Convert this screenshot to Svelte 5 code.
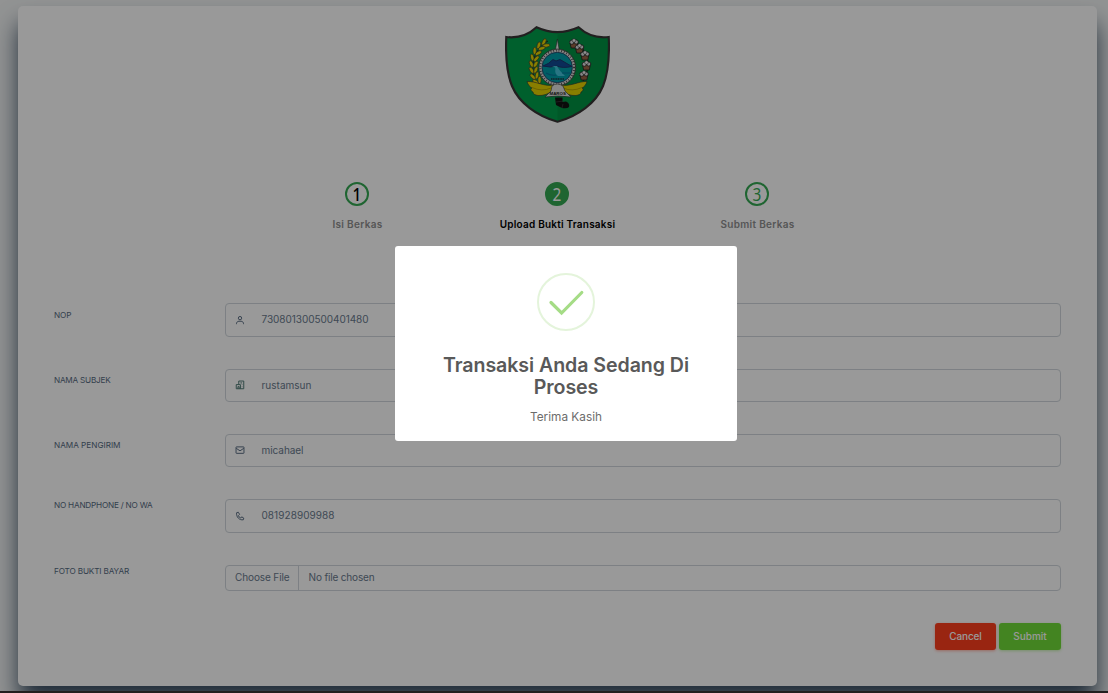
<script>
  const steps = [
    { n: 1, label: 'Isi Berkas', width: 50, state: 'done' },
    { n: 2, label: 'Upload Bukti Transaksi', width: 115.5, state: 'active' },
    { n: 3, label: 'Submit Berkas', width: 74, state: 'todo' }
  ];
  const fields = [
    { label: 'NOP', lw: 17.5, value: '730801300500401480', vw: 107, icon: 'user', drop: 5.4 },
    { label: 'NAMA SUBJEK', lw: 56.5, value: 'rustamsun', vw: 50, icon: 'building', drop: 5 },
    { label: 'NAMA PENGIRIM', lw: 66.5, value: 'micahael', vw: 42, icon: 'mail', drop: 4.8 },
    { label: 'NO HANDPHONE / NO WA', lw: 98.5, value: '081928909988', vw: 73, icon: 'phone', drop: 0 }
  ];

  const leaves = [[41, 17, 55], [36, 20, 45], [32, 25, 30], [29.5, 31, 15], [28.5, 37, 3], [28.5, 43, -6], [29.5, 49, -18], [32, 54, -28]];
  const cotton = [[69, 17], [74.5, 22], [80, 29], [81.5, 39], [79, 49]];

  // Spreads a line of text evenly over a fixed width.
  function fit(node, width) {
    const apply = () => {
      node.style.letterSpacing = '0px';
      const natural = node.getBoundingClientRect().width;
      const count = node.textContent.length;
      node.style.letterSpacing = (width - natural) / count + 'px';
    };
    apply();
    document.fonts?.ready.then(apply);
  }
</script>

<div class="page">
  <main class="card">
    <svg class="logo" viewBox="0 0 105 97">
      <path d="M1.3 11 Q19 13 31.5 1.3 Q52.5 11 73.5 1.3 Q86 13 103.7 11 C104.5 29 104 45 98 60 C91 77 73 90 52.5 95.7 C32 90 14 77 7 60 C1 45 .5 29 1.3 11Z" fill="#00a04c" stroke="#373435" stroke-width="2.2" />
      <path d="M73.5 2.6 Q86 13.5 102.6 12 C103.4 30 103 45 97 60 C90 76 73 89 52.5 94.5V8.4Q64 7 73.5 2.6Z" fill="#007a35" opacity=".35" />
      <path d="M43 15C29 23 24 40 31 57" fill="none" stroke="#222" stroke-width="1" />
      {#each leaves as g}
        <g transform="translate({g[0]} {g[1]}) rotate({g[2]})" fill="#e5d500" stroke="#333" stroke-width=".6">
          <ellipse cx="-2.3" cy="0" rx="1.7" ry="3.6" transform="rotate(-28)" />
          <ellipse cx="2.5" cy="0" rx="1.7" ry="3.6" transform="rotate(28)" />
        </g>
      {/each}
      <path d="M71 17Q82 25 83 36Q83 48 78 55" fill="none" stroke="#222" stroke-width="1.1" />
      {#each cotton as c}
        <g transform="translate({c[0]} {c[1]})">
          <path d="M-4 0L4-1L2.8 5L-2.8 5Z" fill="#9a6344" stroke="#222" stroke-width=".8" />
          <circle cx="-2.2" cy="-.8" r="2.1" fill="#dedede" stroke="#222" stroke-width=".8" />
          <circle cx="2.2" cy="-1" r="2.1" fill="#dedede" stroke="#222" stroke-width=".8" />
          <circle cx="0" cy="-2.5" r="1.8" fill="#eee" stroke="#333" stroke-width=".5" />
        </g>
      {/each}
      <path d="M50.2 25L52.4 13L54.4 25Z" fill="#eee" stroke="#333" stroke-width=".6" />
      <circle cx="52.2" cy="41.5" r="18.4" fill="#dcd9d9" stroke="#333" stroke-width=".8" />
      <circle cx="52.2" cy="41.5" r="17" fill="none" stroke="#444" stroke-width="2.2" stroke-dasharray=".8 1.9" />
      <circle cx="52.2" cy="41.5" r="15.2" fill="#009da8" stroke="#24345d" stroke-width=".8" />
      <path d="M38 40Q44 38 48 33.5L51 35L55 33.5L67 40.5Q57 42.5 52 40Q45 42 38 40Z" fill="#124a94" stroke="#1c356f" stroke-width="1" />
      <path d="M47 40C54 42 47 45 53 50L60 50C56 46 54 44 52 40Z" fill="#45c4dc" />
      <path d="M41 47Q46 50 51 49M57 47H65" stroke="#08759c" stroke-width="1.2" fill="none" />
      <path d="M46 53H59" stroke="#20333d" stroke-width="1.6" stroke-dasharray="1.2 .5" />
      <path d="M48 59C40 61 31 55 22 55.5C23 59 25 61 27 62C25 63 26 65 28 66C28 68 30 69 33 69.5Q41 70 49 64ZM56 59C65 61 74 55 82 55.5C81 59 79 61 77 62C79 63 78 65 76 66C76 68 74 69 71 69.5Q63 70 55 64Z" fill="#e5d300" stroke="#333" stroke-width=".6" />
      <path d="M27 61.5Q37 66 46 62M77 61.5Q67 66 58 62" fill="none" stroke="#8a7d00" stroke-width=".5" />
      <path d="M47 60Q52 56 58 60L60 65L66 71Q53 69 40 71L46 65Z" fill="#e2e2df" stroke="#333" stroke-width=".6" />
      <text x="52.7" y="69" text-anchor="middle">MAROS</text>
      <path d="M50 71.5H57.5V76L61 75.5Q65 77 64 81Q62 83 57 82L51 79Z" fill="#111" />
      <path d="M51 76L58 75M58 78L57 82" stroke="#666" stroke-width=".4" />
    </svg>

    <div class="steps">
      {#each steps as s}
        <div class="step {s.state}">
          <span class="num"><span class="digit">{s.n}</span></span>
          <div class="caption"><span use:fit={s.width}>{s.label}</span></div>
        </div>
      {/each}
    </div>

    <form class="form" onsubmit={(e) => e.preventDefault()}>
      {#each fields as f}
        <div class="row">
          <div class="label" style="padding-top:{f.drop}px"><span use:fit={f.lw}>{f.label}</span></div>
          <div class="input">
            <svg class="icon {f.icon}" viewBox="0 0 24 24">
              {#if f.icon === 'user'}
                <circle cx="12" cy="7.5" r="4" /><path d="M3.5 22v-1c0-4 3-6 6-6h5c3 0 6 2 6 6v1" />
              {:else if f.icon === 'building'}
                <path d="M9 10V2.5h12v18.5H3V11h10v10M7 21v-5h3v5M13 7h4M17 11v1M17 16v1" />
              {:else if f.icon === 'mail'}
                <rect x="2.5" y="4.5" width="19" height="15.5" rx="1" /><path d="m3 8 9 6 9-6" />
              {:else}
                <path d="M4 4l4-1 3 5-3 3c1 3 3 5 6 6l2-3 5 3-1 4c-9 2-18-7-16-17Z" />
              {/if}
            </svg>
            <span use:fit={f.vw}>{f.value}</span>
          </div>
        </div>
      {/each}
      <div class="row">
        <div class="label"><span use:fit={75}>FOTO BUKTI BAYAR</span></div>
        <div class="input file">
          <div class="choose"><span use:fit={54.5}>Choose File</span></div>
          <div class="none"><span use:fit={66}>No file chosen</span></div>
        </div>
      </div>
      <div class="actions">
        <button class="cancel"><span use:fit={32.5}>Cancel</span></button>
        <button class="submit"><span use:fit={33.5}>Submit</span></button>
      </div>
    </form>
  </main>
  <div class="strip"></div>
</div>

<div class="overlay">
  <div class="modal" role="dialog">
    <svg class="check" viewBox="0 0 58 58">
      <circle cx="29" cy="29" r="28" fill="none" stroke="#e4f4db" stroke-width="2" />
      <path d="M14 29.5L24.6 40L44.8 19.5" fill="none" stroke="#a5dc86" stroke-width="3.2" stroke-linecap="round" />
    </svg>
    <h2><span use:fit={246}>Transaksi Anda Sedang Di</span><br /><span use:fit={64.5}>Proses</span></h2>
    <p><span use:fit={72}>Terima Kasih</span></p>
  </div>
</div>

<style>
  :global(body) { margin: 0; overflow: hidden; background: #f5f5f9; }
  .page {
    width: 1108px;
    height: 693px;
    box-sizing: border-box;
    padding: 6px 11px 0 18px;
    overflow: hidden;
    background: #f3f5f5;
    font-family: Inter, sans-serif;
    display: flex;
    flex-direction: column;
  }
  span { display: inline-block; white-space: nowrap; }
  .card {
    flex: none;
    height: 680px;
    box-sizing: border-box;
    padding: 20px 36px 0;
    border-radius: 5px;
    background: #fff;
    box-shadow: 0 17px 23px -1px #34495e;
    display: flex;
    flex-direction: column;
    align-items: center;
  }
  .strip { flex: none; height: 2px; margin: 5px -11px 0 -18px; background: #3a3435; z-index: 1; }
  .logo { width: 105px; height: 97px; }
  .logo text { font: bold 4.4px "Liberation Sans", sans-serif; fill: #222; }
  .steps { display: flex; margin-top: 58.7px; margin-left: -1px; }
  .step { width: 200px; display: flex; flex-direction: column; align-items: center; color: #8f8f8f; }
  .num {
    width: 24.5px;
    height: 24.5px;
    box-sizing: border-box;
    border: 2px solid #34a853;
    border-radius: 50%;
    text-align: center;
    font: 17.5px/20.5px "Noto Sans", sans-serif;
    color: #34a853;
  }
  .digit { transform: scaleX(0.88); }
  .done .num { color: #000; font-weight: 500; }
  .active .num { background: #34a853; color: #fff; }
  .caption { margin-top: 10px; padding-left: 1px; font: 600 10px/16px Inter, sans-serif; }
  .active .caption { color: #000; }
  .form { align-self: stretch; margin-top: 71.2px; display: flex; flex-direction: column; gap: 32px; }
  .row { display: grid; grid-template-columns: 171px 1fr; }
  .label { font-size: 8.2px; line-height: 13px; color: #566a7f; }
  .input {
    height: 33.35px;
    box-sizing: border-box;
    border: 1px solid #d0d6dc;
    border-radius: 4px;
    display: flex;
    align-items: center;
    font-size: 10px;
    color: #697a8d;
  }
  .input > span { margin-top: -1.2px; }
  .icon { width: 10px; height: 10px; margin: -1px 17px 0 8.5px; fill: none; stroke: #566a7f; stroke-width: 2.3; }
  .building { stroke: #4b7772; }
  .file { height: 26px; }
  .choose { width: 73px; height: 24px; line-height: 23px; box-sizing: border-box; padding-left: 9px; border-right: 1px solid #d0d6dc; }
  .none { height: 24px; line-height: 23px; padding-left: 9.5px; }
  .actions { display: flex; justify-content: flex-end; gap: 3px; }
  button {
    width: 61px;
    height: 27px;
    padding: 0;
    border: 0;
    border-radius: 3px;
    font: 500 10px/27px Inter, sans-serif;
    color: #fff;
  }
  .submit { width: 62px; background: #71dd37; box-shadow: 0 1px 3px rgba(113, 221, 55, 0.4); }
  .cancel { background: #ff3e1d; box-shadow: 0 1px 3px rgba(255, 62, 29, 0.4); }
  .overlay { position: fixed; inset: 0; z-index: 5; background: rgba(0, 0, 0, 0.4); font-family: Inter, sans-serif; }
  .modal {
    position: absolute;
    left: 395px;
    top: 246px;
    width: 342px;
    height: 195px;
    box-sizing: border-box;
    padding-top: 27px;
    border-radius: 3px;
    background: #fff;
    display: flex;
    flex-direction: column;
    align-items: center;
    text-align: center;
  }
  .check { width: 58px; height: 58px; }
  h2 { margin: 23px 0 0; font-size: 19.6px; line-height: 22px; font-weight: 600; color: #595959; }
  p { margin: 11px 0 0; font-size: 11.8px; line-height: 16px; color: #6c6c6c; }
</style>
